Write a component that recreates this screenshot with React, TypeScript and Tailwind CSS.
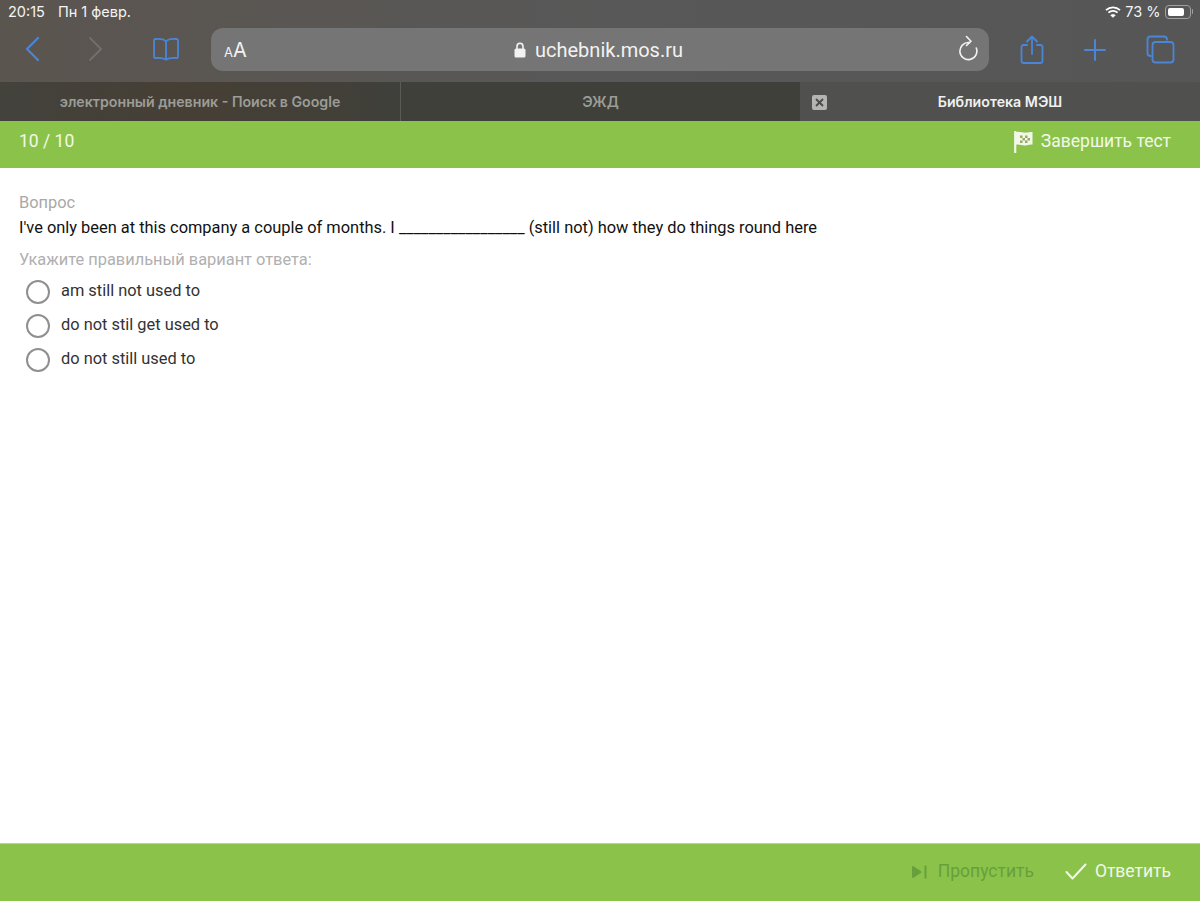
import React from 'react';

const sans = "font-['Inter','Liberation_Sans',sans-serif]";

const blue = '#4a86d8';

const BackIcon = () => (
  <svg width="16" height="26" viewBox="0 0 16 26" fill="none" stroke={blue} strokeWidth="2.2" strokeLinecap="round" strokeLinejoin="round">
    <path d="M14 2 L3 13 L14 24" />
  </svg>
);

const ForwardIcon = () => (
  <svg width="16" height="26" viewBox="0 0 16 26" fill="none" stroke="#6f6f6f" strokeWidth="2" strokeLinecap="round" strokeLinejoin="round">
    <path d="M2 2 L13 13 L2 24" />
  </svg>
);

const BookIcon = () => (
  <svg width="28" height="24" viewBox="0 0 28 24" fill="none" stroke={blue} strokeWidth="1.8" strokeLinecap="round" strokeLinejoin="round">
    <path d="M14 4.5 C12 2 8 1.5 3.5 2 C2.5 2 2 2.5 2 3.5 V20 C2 20.8 2.5 21 3.2 21 C7 20.6 11 20.6 14 22.5 C17 20.6 21 20.6 24.8 21 C25.5 21 26 20.8 26 20 V3.5 C26 2.5 25.5 2 24.5 2 C20 1.5 16 2 14 4.5 Z" />
    <path d="M14 4.5 V22.5" />
  </svg>
);

const LockIcon = () => (
  <svg width="12" height="16" viewBox="0 0 12 16" fill="none">
    <path d="M3 7 V4.5 C3 2.6 4.3 1.2 6 1.2 C7.7 1.2 9 2.6 9 4.5 V7" stroke="#f2f2f2" strokeWidth="1.6" />
    <rect x="0.5" y="6.5" width="11" height="9" rx="1.6" fill="#f2f2f2" />
  </svg>
);

const ReloadIcon = () => (
  <svg width="20" height="26" viewBox="0 0 20 26" fill="none" stroke="#f2f2f2" strokeWidth="1.6" strokeLinecap="round" strokeLinejoin="round">
    <path d="M11 7.6 A8.5 8.5 0 1 0 18.3 13" />
    <path d="M8.5 1.5 L13 6.2 L8.5 10.5" />
  </svg>
);

const ShareIcon = () => (
  <svg width="24" height="30" viewBox="0 0 24 30" fill="none" stroke={blue} strokeWidth="1.8" strokeLinecap="round" strokeLinejoin="round">
    <path d="M7 10 H3.5 C2.2 10 1.5 10.8 1.5 12 V26 C1.5 27.2 2.2 28 3.5 28 H20.5 C21.8 28 22.5 27.2 22.5 26 V12 C22.5 10.8 21.8 10 20.5 10 H17" />
    <path d="M12 19 V2" />
    <path d="M7 6.5 L12 1.5 L17 6.5" />
  </svg>
);

const PlusIcon = () => (
  <svg width="22" height="22" viewBox="0 0 22 22" fill="none" stroke={blue} strokeWidth="2" strokeLinecap="round">
    <path d="M11 1 V21 M1 11 H21" />
  </svg>
);

const TabsIcon = () => (
  <svg width="29" height="29" viewBox="0 0 29 29" fill="none" stroke={blue} strokeWidth="1.8" strokeLinejoin="round">
    <path d="M5.5 21 H4.5 C2.5 21 1.5 20 1.5 18 V4.5 C1.5 2.5 2.5 1.5 4.5 1.5 H18 C20 1.5 21 2.5 21 4.5 V5.5" />
    <rect x="6.5" y="7" width="21" height="20.5" rx="3" />
  </svg>
);

const WifiIcon = () => (
  <svg width="16" height="12" viewBox="0 0 16 12" fill="none" stroke="#fff" strokeWidth="1.8" strokeLinecap="butt">
    <path d="M1 4.2 C5 0.4 11 0.4 15 4.2" />
    <path d="M3.4 6.7 C6 4.3 10 4.3 12.6 6.7" />
    <path d="M8 11.6 L5.6 9.2 C7 7.9 9 7.9 10.4 9.2 Z" fill="#fff" strokeWidth="0.4" />
  </svg>
);

const Battery = () => (
  <div className="flex items-center">
    <div className="flex h-[14px] w-[26px] items-center rounded-[4px] border border-[#a0a0a0] p-[2px]">
      <div className="h-full w-[16px] rounded-[2px] bg-white" />
    </div>
    <div className="ml-[1px] h-[5px] w-[1.5px] rounded-r-full bg-[#a0a0a0]" />
  </div>
);

const FlagIcon = () => (
  <svg width="19" height="22" viewBox="0 0 19 22" fill="none">
    <path d="M1.2 1 V21.5" stroke="#f2f8e8" strokeWidth="2.2" strokeLinecap="round" />
    <path d="M2 1 C6 0.4 9 2 12 1.6 C14 1.4 16 1 18.5 1 L18.5 13.5 C15 13.2 13 14.5 10.5 14.5 C7.5 14.5 5 13 2 13.8 Z" fill="#f2f8e8" />
    <path d="M6 4.5 H8.5 V7 H6 Z M11 4.5 H13.5 V7 H11 Z M8.5 7 H11 V9.5 H8.5 Z M13.5 7 H16 V9.5 H13.5 Z M6 9.5 H8.5 V12 H6 Z M11 9.5 H13.5 V12 H11 Z" fill="#9aa86a" />
  </svg>
);

const SkipIcon = () => (
  <svg width="16" height="14" viewBox="0 0 16 14" fill="#679f3c" stroke="#679f3c" strokeWidth="2">
    <path d="M2 2 L9.5 7 L2 12 Z" strokeLinejoin="round" />
    <path d="M14.5 0.5 V13.5" />
  </svg>
);

const CheckIcon = () => (
  <svg width="22" height="17" viewBox="0 0 22 17" fill="none" stroke="#f2f8e8" strokeWidth="2" strokeLinecap="round" strokeLinejoin="round">
    <path d="M1.5 9 L7.5 15.5 L20.5 1.5" />
  </svg>
);

const options = ['am still not used to', 'do not stil get used to', 'do not still used to'];

export default function App() {
  return (
    <div className="flex h-[901px] w-[1200px] flex-col overflow-hidden bg-white font-['Roboto',sans-serif]">
      <div className={`bg-gradient-to-r from-[#5b554f] via-[#585858] to-[#565656] ${sans}`}>
        <div className="flex h-[23px] items-center justify-between pl-2 pr-[7px] text-[14.5px] text-[#f4f4f4]">
          <div className="flex gap-[13px]">
            <span>20:15</span>
            <span>Пн 1 февр.</span>
          </div>
          <div className="flex items-center gap-[4px]">
            <WifiIcon />
            <span>73 %</span>
            <Battery />
          </div>
        </div>
        <div className="flex h-[59px] items-start pt-[5px]">
          <div className="flex h-[42px] w-[211px] items-center pl-[24px]">
            <BackIcon />
            <div className="ml-[48px]"><ForwardIcon /></div>
            <div className="ml-[48px]"><BookIcon /></div>
          </div>
          <div className="relative flex h-[43px] w-[778px] items-center justify-center rounded-[12px] bg-[#757575] text-[#f2f2f2]">
            <span className="absolute left-[13px] flex items-baseline">
              <span className="text-[13px]">A</span>
              <span className="text-[20px]">A</span>
            </span>
            <span className="-ml-[3px] flex items-center gap-[9px] text-[20px] font-['Roboto',sans-serif]">
              <LockIcon />
              uchebnik.mos.ru
            </span>
            <span className="absolute right-[11px] top-[7px]"><ReloadIcon /></span>
          </div>
          <div className="flex h-[43px] flex-1 items-center pl-[31px]">
            <ShareIcon />
            <div className="ml-[40px]"><PlusIcon /></div>
            <div className="ml-[40px]"><TabsIcon /></div>
          </div>
        </div>
        <div className="flex h-[39px] text-[14.2px] font-semibold">
          <div className="flex w-[400px] items-center justify-center bg-gradient-to-r from-[#43423c] via-[#463f35] to-[#3f403a] text-[#9c9c96]">электронный дневник - Поиск в Google</div>
          <div className="flex w-[400px] items-center justify-center border-l border-[#5a5a56] bg-[#3f403a] text-[#9c9c96]">ЭЖД</div>
          <div className="relative flex w-[400px] items-center justify-center bg-[#50504e] text-[#f0f0f0]">
            <span className="absolute left-[12px] top-[13px] flex h-[15px] w-[15px] items-center justify-center rounded-[2px] bg-[#b4b4b4]">
              <svg width="9" height="9" viewBox="0 0 9 9" stroke="#4a4a4a" strokeWidth="1.8">
                <path d="M1 1 L8 8 M8 1 L1 8" />
              </svg>
            </span>
            Библиотека МЭШ
          </div>
        </div>
      </div>

      <div className="flex h-[47px] items-center justify-between bg-[#8bc34a] pb-[6px] pl-[19px] pr-[29px] text-[17.5px] text-[#f2f8e8]">
        <span>10 / 10</span>
        <span className="flex items-center gap-[8px]">
          <FlagIcon />
          Завершить тест
        </span>
      </div>

      <div className="flex-1 px-[19px] pt-[25px] text-[16.4px] leading-[20px]">
        <div className="text-[#a8a8a8]">Вопрос</div>
        <div className="mt-[5px] text-[#111111]">I've only been at this company a couple of months. I _________________ (still not) how they do things round here</div>
        <div className="mt-[12px] text-[#b0b0b0]">Укажите правильный вариант ответа:</div>
        <div className="mt-[4px] flex flex-col">
          {options.map(option => (
            <div key={option} className="flex h-[34px] items-center pl-[7px] text-[#333333]">
              <span className="mt-[1px] h-[24px] w-[24px] rounded-full border-[2px] border-[#8f8f8f]" />
              <span className="ml-[11px] -mt-[1px]">{option}</span>
            </div>
          ))}
        </div>
      </div>

      <div className="flex h-[58px] items-center justify-end border-t border-[#b5d98f] bg-[#8bc34a] pb-[2px] pr-[29px] text-[17.5px]">
        <span className="flex items-center gap-[11px] text-[#679f3c]">
          <SkipIcon />
          Пропустить
        </span>
        <span className="ml-[31px] flex items-center gap-[8px] text-[#f2f8e8]">
          <CheckIcon />
          Ответить
        </span>
      </div>
    </div>
  );
}
